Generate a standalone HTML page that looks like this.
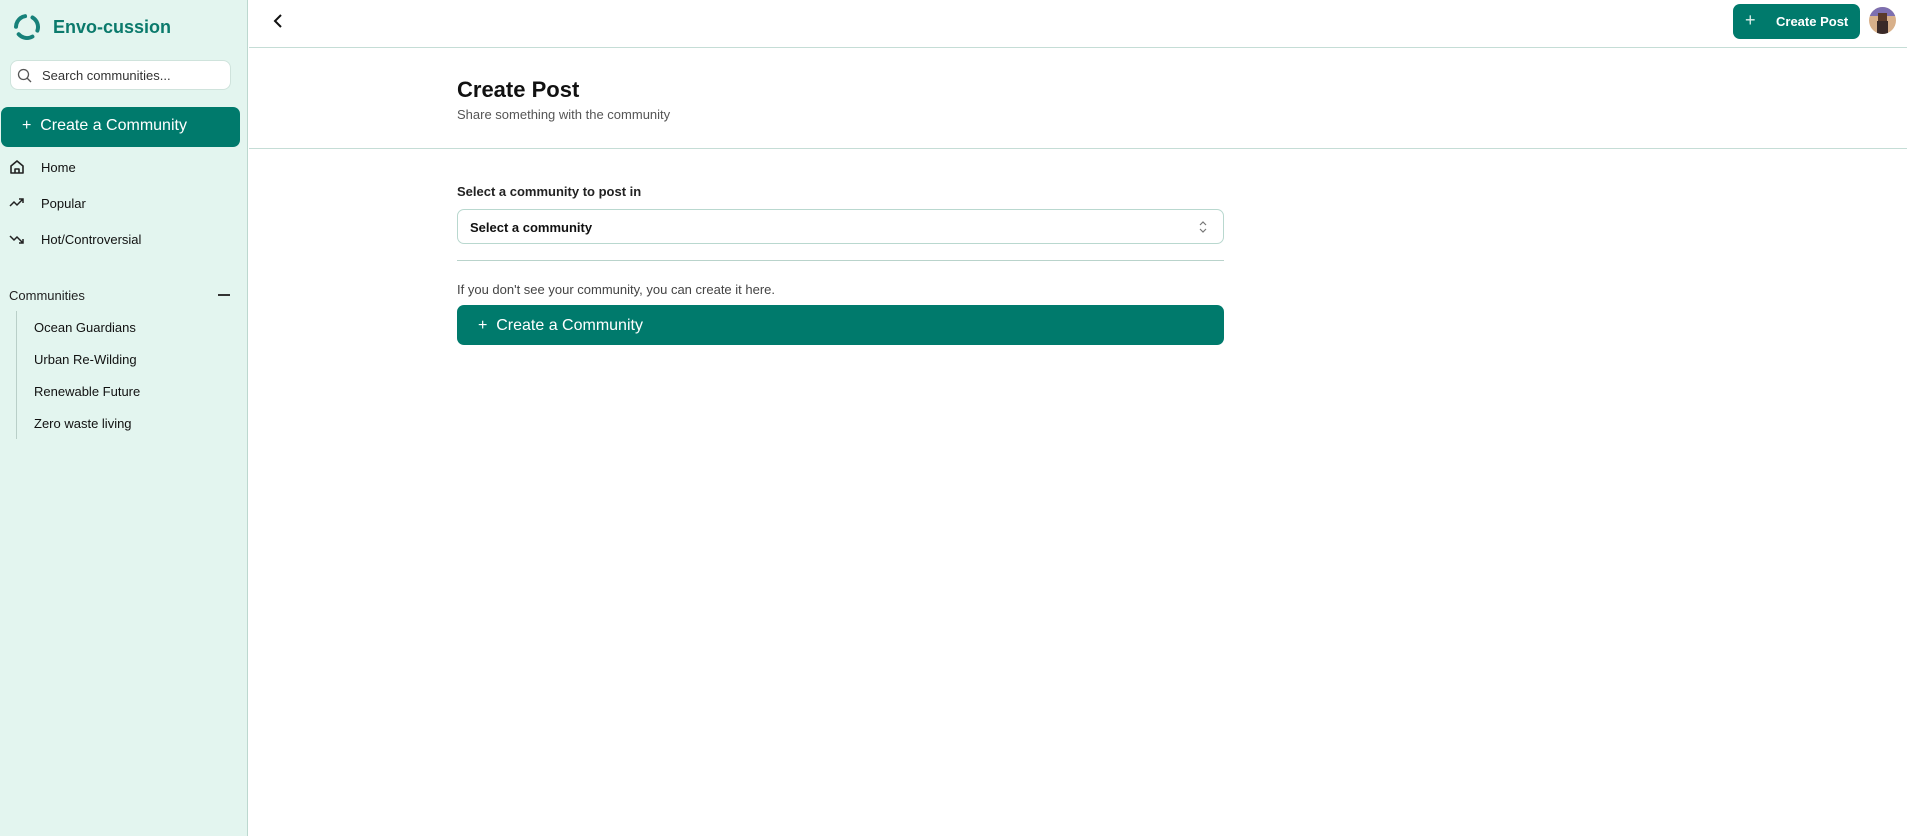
<!DOCTYPE html>
<html><head><meta charset="utf-8"><style>
*{box-sizing:border-box;margin:0;padding:0}
body{width:1907px;height:836px;overflow:hidden;font-family:"Liberation Sans",sans-serif;background:#fff;position:relative;color:#111}
.a{position:absolute}
.side{left:0;top:0;width:248px;height:836px;background:#e3f5ef;border-right:1px solid #bcd8cf}
.t{position:absolute;white-space:nowrap}
</style></head><body>
<div class="a side">
 <svg class="a" style="left:12px;top:12px" width="30" height="30" viewBox="0 0 30 30"><circle cx="15" cy="15" r="11" fill="none" stroke="#17817a" stroke-width="4" stroke-linecap="round" stroke-dasharray="15 8" transform="rotate(-60 15 15)"/></svg>
 <div class="t" style="left:53px;top:17px;font-size:18px;font-weight:bold;color:#0b7a6c">Envo-cussion</div>
 <div class="a" style="left:10px;top:60px;width:221px;height:30px;background:#fff;border:1px solid #cfe3dc;border-radius:8px"></div>
 <svg class="a" style="left:17px;top:68px" width="15" height="15" viewBox="0 0 15 15"><circle cx="6.5" cy="6.5" r="5" fill="none" stroke="#555" stroke-width="1.3"/><path d="M10 10l4 4" stroke="#555" stroke-width="1.3"/></svg>
 <div class="t" style="left:42px;top:68px;font-size:13px;color:#333">Search communities...</div>
 <div class="a" style="left:1px;top:107px;width:239px;height:40px;background:#007a6c;border-radius:7px"></div>
 <div class="t" style="left:22px;top:117px;font-size:16px;color:#fff">+&nbsp;&nbsp;Create a Community</div>
 <svg class="a" style="left:9px;top:159px" width="16" height="16" viewBox="0 0 16 16"><path d="M2 7L8 2l6 5v7H2z M6 14V10h4v4" fill="none" stroke="#222" stroke-width="1.6" stroke-linejoin="round"/></svg>
 <div class="t" style="left:41px;top:160px;font-size:13px">Home</div>
 <svg class="a" style="left:9px;top:196px" width="16" height="14" viewBox="0 0 16 14"><path d="M1 10l4-4 3 3 6-6M10 3h4v4" fill="none" stroke="#222" stroke-width="1.5"/></svg>
 <div class="t" style="left:41px;top:196px;font-size:13px">Popular</div>
 <svg class="a" style="left:9px;top:233px" width="16" height="14" viewBox="0 0 16 14"><path d="M1 3l4 4 3-3 6 6M10 10h4V6" fill="none" stroke="#222" stroke-width="1.5"/></svg>
 <div class="t" style="left:41px;top:232px;font-size:13px">Hot/Controversial</div>
 <div class="t" style="left:9px;top:288px;font-size:13px;color:#222">Communities</div>
 <div class="a" style="left:218px;top:294px;width:12px;height:2px;background:#333"></div>
 <div class="a" style="left:16px;top:311px;width:1px;height:128px;background:#b9cfc8"></div>
 <div class="t" style="left:34px;top:320px;font-size:13px">Ocean Guardians</div>
 <div class="t" style="left:34px;top:352px;font-size:13px">Urban Re-Wilding</div>
 <div class="t" style="left:34px;top:384px;font-size:13px">Renewable Future</div>
 <div class="t" style="left:34px;top:416px;font-size:13px">Zero waste living</div>
</div>
<div class="a" style="left:249px;top:47px;width:1658px;height:1px;background:#c5ddd6"></div>
<svg class="a" style="left:271px;top:13px" width="14" height="16" viewBox="0 0 14 16"><path d="M10 2L4 8l6 6" fill="none" stroke="#111" stroke-width="2"/></svg>
<div class="a" style="left:1733px;top:4px;width:127px;height:35px;background:#007a6c;border-radius:7px"></div>
<div class="t" style="left:1745px;top:10px;font-size:18px;color:#e0f0ec">+</div>
<div class="t" style="left:1776px;top:14px;font-size:13px;font-weight:bold;color:#fff">Create Post</div>
<svg class="a" style="left:1869px;top:7px" width="27" height="27" viewBox="0 0 27 27"><defs><clipPath id="c"><circle cx="13.5" cy="13.5" r="13.5"/></clipPath></defs><g clip-path="url(#c)"><rect width="27" height="27" fill="#d8b08a"/><rect width="27" height="9" fill="#7d6fb0"/><rect x="9" y="6" width="9" height="9" fill="#5a3a2a"/><rect x="8" y="14" width="11" height="13" fill="#3a2a28"/></g></svg>
<div class="a" style="left:249px;top:148px;width:1658px;height:1px;background:#c5ddd6"></div>
<div class="t" style="left:457px;top:77px;font-size:22px;font-weight:bold;color:#111">Create Post</div>
<div class="t" style="left:457px;top:107px;font-size:13px;color:#555">Share something with the community</div>
<div class="t" style="left:457px;top:184px;font-size:13px;font-weight:bold;color:#222">Select a community to post in</div>
<div class="a" style="left:457px;top:209px;width:767px;height:35px;border:1px solid #b9d8cf;border-radius:7px"></div>
<div class="t" style="left:470px;top:220px;font-size:13px;font-weight:bold;color:#111">Select a community</div>
<svg class="a" style="left:1198px;top:219px" width="10" height="16" viewBox="0 0 10 16"><path d="M2 6l3-3 3 3M2 10l3 3 3-3" fill="none" stroke="#777" stroke-width="1.2"/></svg>
<div class="a" style="left:457px;top:260px;width:767px;height:1px;background:#b9d3cb"></div>
<div class="t" style="left:457px;top:282px;font-size:13px;color:#444">If you don't see your community, you can create it here.</div>
<div class="a" style="left:457px;top:305px;width:767px;height:40px;background:#007a6c;border-radius:7px"></div>
<div class="t" style="left:478px;top:317px;font-size:16px;color:#fff">+&nbsp;&nbsp;Create a Community</div>
</body></html>
